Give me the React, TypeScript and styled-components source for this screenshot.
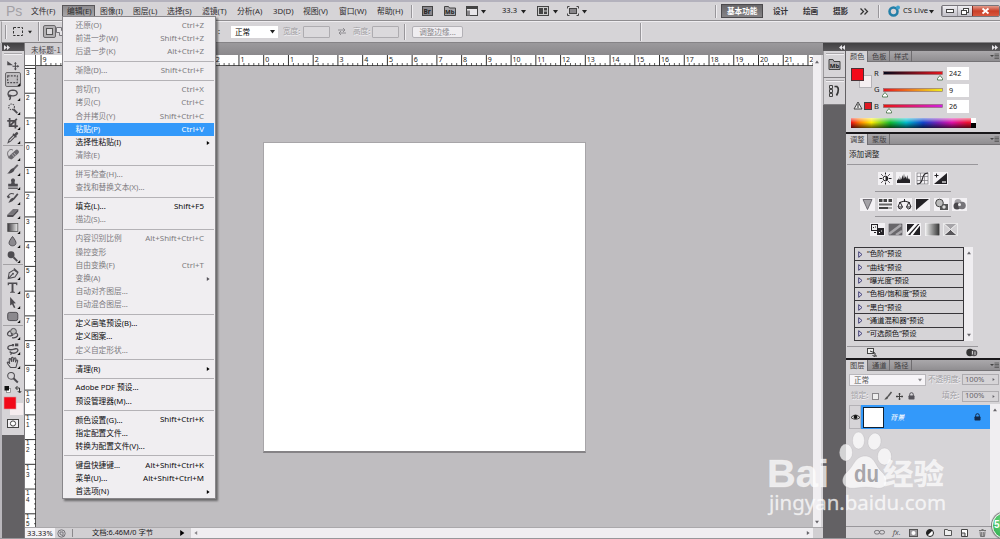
import React from "react";
import styled, { createGlobalStyle, css } from "styled-components";

const sans = `"Noto Sans", "Noto Sans CJK SC", sans-serif`;
const cjk = `"Noto Sans CJK SC", "Noto Sans", sans-serif`;

const Global = createGlobalStyle`
  *{box-sizing:border-box}
  body{margin:0;overflow:hidden;font-family:${sans};font-size:7.6px;color:#222;line-height:1}
  svg{display:block;overflow:visible;flex:none}
`;

const Window = styled.div`
  position: relative;
  width: 1000px;
  height: 539px;
  display: flex;
  flex-direction: column;
  background: #d6d4d7;
  white-space: nowrap;
  overflow: hidden;
`;

/* ---------- menu bar ---------- */
const MenuBar = styled.header`
  height: 21px;
  flex: none;
  border-top: 2px solid #b4b2bd;
  border-bottom: 1px solid #8f8d90;
  display: flex;
  align-items: center;
  padding-left: 5px;
  background: #d6d4d7;
`;
const Logo = styled.div`
  width: 21px;
  padding-left: 1px;
  font: 14px/16px "Liberation Sans", sans-serif;
  color: #a3a1a6;
`;
const MenuItem = styled.div<{ $w: number; $on?: boolean }>`
  width: ${(p) => p.$w}px;
  height: 13px;
  line-height: 12px;
  padding-left: 5px;
  font-size: 7.8px;
  color: #2d2b2e;
  ${(p) =>
    p.$on &&
    css`
      background: linear-gradient(#8e8c8f, #a8a6a9);
      border: 1px solid #59575a;
      padding-left: 4px;
      line-height: 11px;
    `}
`;
const VRule = styled.i<{ $h?: number; $l?: number; $r?: number }>`
  width: 2px;
  height: ${(p) => p.$h ?? 13}px;
  margin-left: ${(p) => p.$l ?? 0}px;
  margin-right: ${(p) => p.$r ?? 0}px;
  border-left: 1px solid #98969a;
  border-right: 1px solid #efedf0;
  flex: none;
`;
const BarIcon = styled.div<{ $w: number }>`
  width: ${(p) => p.$w}px;
  flex: none;
  display: flex;
  align-items: center;
`;
const Workspace = styled.div<{ $w: number; $on?: boolean }>`
  width: ${(p) => p.$w}px;
  height: 14px;
  padding-left: 5px;
  font: 700 7.6px/13px ${cjk};
  color: #333135;
  ${(p) =>
    p.$on &&
    css`
      background: linear-gradient(#69676a, #858386);
      border: 1px solid #4c4a4d;
      color: #fff;
      line-height: 11px;
    `}
`;
const WindowButtons = styled.div`
  display: flex;
  height: 12px;
  width: 59px;
  border: 1px solid #77757b;
  border-radius: 2px;
  overflow: hidden;
  background: linear-gradient(#f0eff3, #c0bec6);
`;
const WinButton = styled.div<{ $close?: boolean }>`
  width: ${(p) => (p.$close ? 28 : 15.5)}px;
  display: flex;
  align-items: center;
  justify-content: center;
  border-left: ${(p) => (p.$close ? "1px solid #862a20" : "1px solid #99979d")};
  ${(p) => p.$close && "background:linear-gradient(#e29a8b,#cb3f28 50%,#d8583e);"}
`;

/* ---------- options bar ---------- */
const OptionsBar = styled.div`
  height: 22px;
  flex: none;
  border-top: 1px solid #efedf0;
  border-bottom: 1px solid #858386;
  border-left: 1px solid #a09ea1;
  margin-left: 1px;
  padding-left: 3px;
  display: flex;
  align-items: center;
  padding-bottom: 1px;
`;
const ModeButton = styled.div`
  width: 13px;
  height: 13px;
  border: 1px solid #69676a;
  border-radius: 2px;
  background: #b2b0b3;
  display: flex;
  align-items: center;
  justify-content: center;
`;
const BlendSelect = styled.div`
  width: 47px;
  height: 12px;
  margin-left: 11px;
  background: #fff;
  padding: 0 3px 0 4px;
  display: flex;
  align-items: center;
  justify-content: space-between;
  font: 7.6px/12px ${cjk};
  color: #000;
`;
const FieldLabel = styled.span<{ $w: number; $l: number }>`
  width: ${(p) => p.$w}px;
  margin-left: ${(p) => p.$l}px;
  color: #a09ea3;
  text-shadow: 0.5px 0.5px 0 #f5f3f6;
`;
const DisabledInput = styled.div`
  width: 27px;
  height: 12px;
  border: 1px solid #aeacb0;
  border-radius: 1px;
  background: #dbd9dc;
`;
const RefineButton = styled.div`
  width: 51px;
  height: 12px;
  margin-left: 6px;
  border: 1px solid #b3b1b6;
  border-radius: 2px;
  background: #efedf0;
  color: #89878c;
  text-align: center;
  font: 7.6px/10px ${cjk};
`;

/* ---------- body ---------- */
const Body = styled.main`
  flex: 1;
  min-height: 0;
  display: flex;
  border-bottom: 1px solid #98969a;
`;
const Tools = styled.aside`
  width: 25px;
  flex: none;
  background: #636164;
  border-left: 2px solid #b9b7bc;
  border-right: 1px solid #7b797c;
`;
const DarkHeader = styled.div`
  height: 8px;
  flex: none;
  background: linear-gradient(#414042, #5a585b);
  display: flex;
  align-items: center;
  justify-content: space-between;
  padding: 0 2px;
`;
const ToolPanel = styled.div`
  background: #d6d4d7;
  height: 384px;
  display: flex;
  flex-direction: column;
  align-items: center;
`;
const Grip = styled.i`
  width: 18px;
  height: 2px;
  margin: 2px 0 2.7px;
  border-top: 1px solid #a9a7aa;
  border-bottom: 1px solid #f1eff2;
  flex: none;
`;
const Tool = styled.div<{ $on?: boolean }>`
  width: 16px;
  height: 14.5px;
  flex: none;
  display: flex;
  align-items: center;
  justify-content: center;
  border-radius: 2px;
  ${(p) => p.$on && "border:1px solid #69676a;background:#c0bec1;"}
`;
const ToolRule = styled.i`
  width: 20px;
  height: 1px;
  margin: 0.8px 0;
  background: #a4a2a5;
  flex: none;
`;
const DocColumn = styled.section`
  width: 798px;
  flex: none;
  display: flex;
  flex-direction: column;
`;
const TabStrip = styled.div`
  height: 12px;
  flex: none;
  background: linear-gradient(#9b999c, #8b898c);
  display: flex;
`;
const DocTab = styled.div`
  width: 190px;
  padding-left: 6px;
  background: #d1cfd2;
  font: 7.6px/13px ${cjk};
  color: #454347;
`;
const Viewport = styled.div`
  flex: 1;
  min-height: 0;
  display: grid;
  grid-template-columns: 11px 777px 8px;
  grid-template-rows: 11px 1fr;
`;
const Corner = styled.div`
  background: #fff;
  border-right: 1px solid #555;
  border-bottom: 1px solid #555;
`;
const RulerBox = styled.div`
  overflow: hidden;
  background: #fff;
`;
const Canvas = styled.div`
  background: #bfbdc0;
  padding: 76px 0 0 227px;
`;
const Paper = styled.div`
  width: 323px;
  height: 311px;
  background: #fff;
  border: 1px solid #a7a5a8;
  border-bottom: 2px solid #858386;
`;
const VScroll = styled.div`
  grid-column: 3;
  grid-row: 1 / 3;
  background: #f0eef1;
  display: flex;
  flex-direction: column;
  align-items: center;
  justify-content: space-between;
  padding: 5px 0 3px;
`;
const Status = styled.footer`
  height: 11px;
  flex: none;
  display: flex;
  align-items: center;
  border-top: 1px solid #aaa8ab;
  background: #d1cfd2;
  color: #19171a;
`;
const Zoom = styled.div`
  width: 30px;
  height: 10px;
  background: #f5f3f6;
  padding-left: 2px;
  line-height: 10px;
  font-size: 7.6px;
`;
const DocSize = styled.div`
  width: 107px;
  padding-left: 19px;
  font-size: 7.3px;
  border-left: 1px solid #8b898c;
  margin-left: 4px;
`;
const HScroll = styled.div`
  flex: 1;
  height: 10px;
  margin-left: 6px;
  margin-right: 10px;
  padding: 0 3px;
  background: #f0eef1;
  display: flex;
  align-items: center;
  justify-content: space-between;
`;

/* ---------- right docks ---------- */
const Docks = styled.aside`
  width: 177px;
  display: flex;
  flex-direction: column;
  background: #636164;
`;
const DockRow = styled.div`
  flex: 1;
  min-height: 0;
  display: flex;
`;
const IconDock = styled.div`
  width: 23px;
  flex: none;
`;
const DockCell = styled.div`
  width: 22px;
  height: 27px;
  background: #d6d4d7;
  border-bottom: 1px solid #807e81;
  border-left: 1px solid #9b999c;
  display: flex;
  flex-direction: column;
  align-items: center;
`;
const Panels = styled.div`
  width: 154px;
  background: #d6d4d7;
  display: flex;
  flex-direction: column;
`;
const Panel = styled.section<{ $h: number }>`
  height: ${(p) => p.$h}px;
  flex: none;
  border-bottom: 2px solid #19171a;
  display: flex;
  flex-direction: column;
`;
const Tabs = styled.div`
  height: 11px;
  flex: none;
  background: linear-gradient(#aaa8ab, #908e91);
  border-bottom: 1px solid #757376;
  display: flex;
  align-items: center;
  padding-right: 1px;
`;
const Tab = styled.div<{ $on?: boolean }>`
  width: 22px;
  height: 11px;
  padding-left: 4px;
  font: 7.2px/10px ${cjk};
  color: #3f3d41;
  border-right: 1px solid #6f6d70;
  ${(p) => p.$on && "background:#d6d4d7;"}
`;
const Flex = styled.div<{ $j?: string; $g?: number; $h?: number; $p?: string; $m?: string; $w?: number }>`
  display: flex;
  align-items: center;
  flex: none;
  justify-content: ${(p) => p.$j ?? "flex-start"};
  gap: ${(p) => p.$g ?? 0}px;
  height: ${(p) => (p.$h ? p.$h + "px" : "auto")};
  width: ${(p) => (p.$w ? p.$w + "px" : "auto")};
  padding: ${(p) => p.$p ?? 0};
  margin: ${(p) => p.$m ?? 0};
`;
const Value = styled.div`
  width: 22px;
  height: 13px;
  background: #fff;
  padding-left: 2px;
  font-size: 7.2px;
  line-height: 12px;
`;
const Spectrum = styled.div`
  display: flex;
  width: 125px;
  height: 10px;
  margin: 3px 0 0 5px;
`;
const Hue = styled.div`
  flex: 1;
  background:
    linear-gradient(rgba(255, 255, 255, 0.6), transparent 45%, rgba(0, 0, 0, 0.65)),
    linear-gradient(90deg, #e11, #f80 8%, #fe0 17%, #1b3 33%, #0bc 46%, #14c 60%, #72b 72%, #d1a 84%, #e13 97%);
`;
const BlackWhite = styled.div`
  width: 5px;
  background: linear-gradient(#fff 50%, #000 50%);
`;
const HRule = styled.i<{ $l: number; $w: number }>`
  width: ${(p) => p.$w}px;
  height: 1px;
  margin-left: ${(p) => p.$l}px;
  background: #99979b;
  flex: none;
`;
const Preset = styled.div`
  height: 13.3px;
  border-bottom: 1px solid #38363a;
  display: flex;
  align-items: center;
  gap: 4px;
  padding-left: 3px;
  font-size: 7.4px;
  color: #111;
`;
const PresetList = styled.div`
  width: 110px;
  border: 1px solid #38363a;
  border-bottom: 0;
`;
const MiniScroll = styled.div<{ $w: number }>`
  width: ${(p) => p.$w}px;
  background: #f0eef1;
  display: flex;
  flex-direction: column;
  align-items: center;
  justify-content: space-between;
  padding: 4px 0;
  align-self: stretch;
`;
const LayerMode = styled.div`
  width: 77px;
  height: 12px;
  border: 1px solid #b9b7bb;
  background: #f7f5f8;
  padding: 0 3px 0 4px;
  display: flex;
  align-items: center;
  justify-content: space-between;
  font: 7.6px/10px ${cjk};
  color: #555;
`;
const Percent = styled.div`
  width: 37px;
  height: 11px;
  border: 1px solid #aeacb0;
  padding: 0 3px 0 2px;
  display: flex;
  align-items: center;
  justify-content: space-between;
  font-size: 7.6px;
  color: #66646a;
`;
const Layer = styled.div`
  width: 129px;
  height: 24px;
  background: #3399fa;
  display: flex;
  align-items: center;
  padding: 0 9px 0 2px;
  color: #fff;
`;
const Thumb = styled.div`
  width: 21px;
  height: 21px;
  background: #fff;
  border: 1px solid #123;
`;
const LayerName = styled.span`
  margin-left: 6px;
  flex: 1;
  font: italic 7.2px/10px ${cjk};
`;
const EyeCell = styled.div`
  width: 12px;
  height: 24px;
  display: flex;
  align-items: center;
  justify-content: center;
  border: 1px solid #b4b2b6;
`;
const LayerBar = styled.div`
  height: 12px;
  border-top: 1px solid #99979b;
  display: grid;
  grid-template-columns: repeat(7, 17.1px);
  padding-left: 25px;
  justify-items: center;
  align-items: center;
  color: #59575c;
`;
const Grow = styled.div`
  flex: 1;
`;

/* ---------- drop-down ---------- */
const Menu = styled.nav`
  position: absolute;
  left: 62px;
  top: 16px;
  width: 154px;
  height: 483px;
  padding: 2.3px 1px 0;
  background: #f0eef1;
  border: 1px solid #88868a;
  box-shadow: 2px 2px 2px rgba(0, 0, 0, 0.45);
`;
const Item = styled.div<{ $off?: boolean; $hot?: boolean }>`
  height: 13.21px;
  padding: 0 10px 0 11.5px;
  display: flex;
  align-items: center;
  justify-content: space-between;
  font-size: 7.7px;
  color: ${(p) => (p.$hot ? "#fff" : p.$off ? "#7d7b80" : "#0c0b0d")};
  ${(p) => p.$hot && "background:#3399fa;"}
`;
const Keys = styled.span<{ $arrow?: boolean }>`
  font-size: 7.95px;
  margin-right: ${(p) => (p.$arrow ? -6 : 0)}px;
`;
const Sep = styled.div`
  height: 5.7px;
  padding-top: 2px;
  &::after {
    content: "";
    display: block;
    height: 1px;
    background: #b4b2b6;
  }
`;

/* ---------- floating marks ---------- */
const Watermark = styled.svg`
  position: absolute;
  left: 760px;
  top: 428px;
`;
const Ball = styled.div`
  position: absolute;
  left: 992px;
  top: 512px;
  width: 27px;
  height: 27px;
  border-radius: 50%;
  border: 1.5px solid #e9f2ea;
  background: radial-gradient(circle at 50% 30%, #6fdc84, #2ba84a);
  box-shadow: 0 0 1px 1px #777;
  color: #fff;
  font: 700 10px/24px "Liberation Sans", sans-serif;
  padding-left: 1px;
`;

type Dir = "d" | "r" | "l" | "u";
const Tri = ({ d = "d", s = 5, c = "#222" }: { d?: Dir; s?: number; c?: string }) => (
  <svg width={s} height={s} viewBox="0 0 10 10">
    <path
      fill={c}
      d={{ d: "M0 2h10L5 9z", u: "M0 8h10L5 1z", r: "M2 0v10l7-5z", l: "M8 0v10L1 5z" }[d]}
    />
  </svg>
);
const Chevs = ({ left = false }) => (
  <svg width="6" height="5" viewBox="0 0 6 5">
    <path fill="#e8e6ea" d={left ? "M3 0v5L0 2.500zM6 0v5L3 2.500z" : "M0 0v5L3 2.500zM3 0v5L6 2.500z"} />
  </svg>
);
const PanelMenu = () => (
  <svg width="9" height="6" viewBox="0 0 9 6">
    <path fill="#444" d="M0 2h4L2 4z" />
    <path stroke="#555" strokeWidth=".8" d="M4.500 1h4.500M4.500 2.500h4.500M4.500 4h4.500M4.500 5.500h4.500" />
  </svg>
);
const Lock = ({ c = "#444" }) => (
  <svg width="7" height="8" viewBox="0 0 7 8">
    <path d="M1.700 4V2.500a1.800 1.800 0 0 1 3.600 0V4" fill="none" stroke={c} />
    <rect x=".5" y="3.500" width="6" height="4" rx=".7" fill={c} />
  </svg>
);

const k = "#4d4b50";
const st = { fill: "none", stroke: k, strokeWidth: 1.1 } as const;
const toolArt: React.ReactNode[] = [
  <g key="a"><path fill={k} d="M1 2l6 4.500H1z" /><path {...st} d="M9.500 4v7M6.500 7.500h6" /><path fill={k} d="M8 5l1.500-2L11 5zM8 10l1.500 2 1.500-2zM11.500 6l2 1.500-2 1.500z" /></g>,
  <rect key="b" x="1.500" y="3" width="10" height="7" {...st} strokeDasharray="2 1.200" />,
  <path key="c" {...st} strokeWidth="1.400" d="M5 9C.500 9 .500 2.500 7 2.200c5 0 6 4.800 1.500 5.800-2 .400-4 0-5-.500C2 7 2 9.500 4 9.500c1 .500 0 2-1 2.500" />,
  <g key="d"><circle cx="5.500" cy="5" r="3" {...st} strokeDasharray="1.500 1" /><path stroke={k} strokeWidth="2" d="M7.500 7.500l4 4" /></g>,
  <path key="e" {...st} strokeWidth="1.800" d="M3.500 1v8.500H12M1 4h8.500v8M4 9l7-7" />,
  <g key="f"><path {...st} d="M2 12l1-3 5-5 1.500 1.500-5 5z" /><path stroke={k} strokeWidth="2.800" strokeLinecap="round" d="M9 4.500L11 2.500" /><path stroke={k} strokeWidth="1.500" d="M7 3l3.500 3.500" /></g>,
  <g key="g"><path stroke="#69676c" strokeWidth="4.400" strokeLinecap="round" d="M5 9.500L11 4" /><path stroke="#c8c6ca" strokeWidth=".8" d="M6 6.500l2.500 3M7.800 5l2.500 3" /><path {...st} strokeWidth=".8" d="M1.500 7C.500 3 5 0 7 2.500M3 11l-1.500-4" /></g>,
  <g key="h"><path stroke="#605e63" strokeWidth="2" d="M12 2L6.500 7.500" /><path fill={k} d="M7.500 5.500c2.500 2-.500 6-7 5.500 3-.500 2.500-5 7-5.500z" /></g>,
  <g key="i" fill={k}><path d="M5 7c1-2-.500-3 0-4 .500-2 3.500-2 4 0 .500 1-1 2 0 4h3v3H2V7z" /><path d="M2 11h10v1.300H2z" /></g>,
  <g key="j"><path stroke={k} strokeWidth="1.800" d="M12 2L7 8" /><path fill={k} d="M7 6c2 2-1 5-5 5 2-1 1-4 5-5z" /><path {...st} d="M8 2C4 .500 2 3 2 5.500M1 4l1 2 2-1" /></g>,
  <g key="k"><path fill="#77757a" d="M1 9l6-6h5.500L7 9z" /><path fill={k} d="M1 9h6l5.500-6v2.500L7 11.500H1z" /></g>,
  <g key="l"><defs><linearGradient id="tg"><stop stopColor="#3a383c" /><stop offset="1" stopColor="#eee" /></linearGradient></defs><rect x="1.500" y="2.500" width="10.500" height="8.500" fill="url(#tg)" stroke="#555" strokeWidth=".8" /></g>,
  <path key="m" d="M6.500 1.500C9 5 10.500 7 10 9c-.700 3-6.300 3-7 0-.500-2 1-4 3.500-7.500z" fill="#8b898e" stroke={k} />,
  <g key="n"><circle cx="5" cy="5" r="3.600" fill={k} /><path stroke={k} strokeWidth="2" d="M7.500 7.500l4 4" /></g>,
  <g key="o"><path {...st} d="M2 12l1-6 5-3 4 3-3 4.500zM2 12l4.500-4.500M8 1.500L12.500 5.500" /><circle cx="7" cy="7" r="1" fill={k} /></g>,
  <path key="p" fill={k} d="M1.500 1.500h10v3h-1l-.500-1.500H7.500v8l1.500.500v.700H4v-.700l1.500-.500V3H3l-.500 1.500h-1z" />,
  <path key="q" fill={k} d="M4 1l6 6.500-2.500.200L9.500 12 8 12.500 6 8.500 4 10z" />,
  <rect key="r" x="1.500" y="2.500" width="10.500" height="8.500" rx="2" fill="#8b898e" stroke={k} />,
  <g key="s"><circle cx="7.500" cy="4.500" r="3" fill="#bbb" stroke={k} /><path {...st} strokeWidth="1.300" d="M4 4C-1 7 2 11 6 8.500M10 6c4 2 1 6-4 5M5 6.500l1.500 2-2.500 1" /></g>,
  <g key="t"><path {...st} strokeWidth="1.400" d="M6 3.500C2 3 .500 6 2.500 7.500s5 0 7-.500 3.500 1.500 2 3-4 2-6 1M3.500 10l2 1.500-1 1.800" /><path fill={k} d="M6 2h2v2.500H6zM9 1.500h3.500v3H9z" /></g>,
  <path key="u" {...st} d="M4.500 12C3 10 1 8 1 7s1.500-1 2.500 1L3 3.500c0-1 1.500-1 1.700 0L5.500 6V2c0-1 1.700-1 1.700 0v4L8.500 2.500c.400-1 1.800-.500 1.500.500l-.500 3.500 1-2c.700-1 1.700 0 1.300 1L10 12z" />,
  <g key="v"><circle cx="5" cy="5" r="3.500" {...st} /><path stroke={k} strokeWidth="2" d="M7.500 7.500l4.500 4.500" /></g>,
];
const noCorner = [0, 21];
const ToolIcon = ({ i }: { i: number }) => (
  <Tool $on={i === 1}>
    <svg width="14" height="12.500" viewBox="0 0 14 13">
      {toolArt[i]}
      {!noCorner.includes(i) && <path d="M14.500 10.500v3h-3z" fill="#111" />}
    </svg>
  </Tool>
);
const range = (a: number, b: number) => Array.from({ length: b - a }, (_, i) => a + i);

const UNIT = 24.74;
const HRuler = () => (
  <svg width="777" height="11" fontSize="7" fill="#222">
    <path d="M0 10.500H777" stroke="#555" />
    {range(-9, 23).map((n) => {
      const x = 227.7 + n * UNIT;
      return (
        <g key={n} stroke="#333">
          <path d={`M${x} 0v11`} />
          <path strokeWidth=".8" d={[1, 2, 3, 4].map((j) => `M${x + (j * UNIT) / 5} 8v3`).join("")} />
          <text x={x + 1.5} y="6.500" stroke="none">{Math.abs(n)}</text>
        </g>
      );
    })}
  </svg>
);
const VRuler = () => (
  <svg width="11" height="462" fontSize="6.300" fontFamily="Liberation Sans" fill="#222">
    <path d="M10.500 0V462" stroke="#555" />
    {range(-3, 16).map((n) => {
      const y = 76.7 + n * UNIT;
      return (
        <g key={n} stroke="#333">
          <path d={`M0 ${y}h11`} />
          <path strokeWidth=".8" d={[1, 2, 3, 4].map((j) => `M9 ${y + (j * UNIT) / 5}h2`).join("")} />
          {String(Math.abs(n)).split("").map((c, i, all) => (
            <text key={i} x="1" y={y + (all.length > 1 ? 5.5 : 7) + i * 7.1} stroke="none">{c}</text>
          ))}
        </g>
      );
    })}
  </svg>
);

const menus: [string, number][] = [
  ["文件(F)", 36], ["编辑(E)", 33], ["图像(I)", 33], ["图层(L)", 34], ["选择(S)", 35], ["滤镜(T)", 35],
  ["分析(A)", 36], ["3D(D)", 30], ["视图(V)", 36], ["窗口(W)", 38], ["帮助(H)", 39],
];

type Entry = [string, string?, string?] | null;
const entries: Entry[] = [
  ["还原(O)", "Ctrl+Z", "off"], ["前进一步(W)", "Shift+Ctrl+Z", "off"], ["后退一步(K)", "Alt+Ctrl+Z", "off"], null,
  ["渐隐(D)...", "Shift+Ctrl+F", "off"], null,
  ["剪切(T)", "Ctrl+X", "off"], ["拷贝(C)", "Ctrl+C", "off"], ["合并拷贝(Y)", "Shift+Ctrl+C", "off"],
  ["粘贴(P)", "Ctrl+V", "hot"], ["选择性粘贴(I)", ">"], ["清除(E)", "", "off"], null,
  ["拼写检查(H)...", "", "off"], ["查找和替换文本(X)...", "", "off"], null,
  ["填充(L)...", "Shift+F5"], ["描边(S)...", "", "off"], null,
  ["内容识别比例", "Alt+Shift+Ctrl+C", "off"], ["操控变形", "", "off"], ["自由变换(F)", "Ctrl+T", "off"],
  ["变换(A)", ">", "off"], ["自动对齐图层...", "", "off"], ["自动混合图层...", "", "off"], null,
  ["定义画笔预设(B)..."], ["定义图案..."], ["定义自定形状...", "", "off"], null,
  ["清理(R)", ">"], null,
  ["Adobe PDF 预设..."], ["预设管理器(M)..."], null,
  ["颜色设置(G)...", "Shift+Ctrl+K"], ["指定配置文件..."], ["转换为配置文件(V)..."], null,
  ["键盘快捷键...", "Alt+Shift+Ctrl+K"], ["菜单(U)...", "Alt+Shift+Ctrl+M"], ["首选项(N)", ">"],
];

const channels: [string, string, string, number][] = [
  ["R", "#00091a,#e8141c", "242", 57], ["G", "#e8141c,#f0f01a", "9", 2], ["B", "#e81410,#d020e0", "26", 6],
];
const presets = ["“色阶”预设", "“曲线”预设", "“曝光度”预设", "“色相/饱和度”预设", "“黑白”预设", "“通道混和器”预设", "“可选颜色”预设"];

const Adj = ({ children }: { children: React.ReactNode }) => (
  <svg width="15" height="13" viewBox="0 0 15 13"><rect width="15" height="13" fill="#f3f1f4" />{children}</svg>
);
const b = "#242226";
const adjRows: React.ReactNode[][] = [
  [
    <g><circle cx="7.500" cy="6.500" r="2.400" fill="#fff" stroke={b} /><path fill={b} d="M7.500 4a2.500 2.500 0 0 1 0 5z" /><path stroke={b} d="M7.500 0.500v2M7.500 10.500v2M1.500 6.500h2.500M11 6.500h2.500M3.300 2.300l1.400 1.400M10.300 9.300l1.400 1.400M3.300 10.700l1.400-1.400M10.300 3.700l1.400-1.400" /></g>,
    <path fill={b} d="M1 11V7.500l1 1V6l1 2 .800-1V4l1 4 .800-1.500L6.500 3l.7 4 .8-5.500.7 5 .8-2.500.8 3 1-4 .7 4.500 1-1.500.500 2 .500-1v4z" />,
    <g fill="none" stroke="#77757a" strokeWidth=".7"><rect x="2" y="1" width="11" height="11" /><path d="M5.500 1v11M9.500 1v11M2 4.500h11M2 8.500h11" /><path stroke={b} strokeWidth="1.100" d="M2 12c8 0 3-11 11-11" /></g>,
    <g><path fill={b} d="M1 12L14 1v11z" /><path stroke={b} d="M1.500 3.500h4M3.500 1.500v4" /><path stroke="#fff" strokeWidth="1.200" d="M9 10h4" /></g>,
  ],
  [
    <path fill="#a5a3a8" stroke="#55535a" strokeWidth=".8" d="M3 1.500h9L7.500 11.500z" />,
    <g fill="#444"><path d="M1 1h3.500v3H1zM5.500 1H9v3H5.500zM10.500 1H14v3h-3.500z" /><path fill="#666" d="M1 5.500h13v2H1z" /><path d="M1 9h9v2H1z" /><path fill="#aaa" d="M10 9h4v2h-4z" /></g>,
    <path fill="none" stroke={b} d="M7.500 1v3M2.500 4.500q5-3 10 0M3 4L1 9h4.500zM12 4l-2.500 5H14zM1 9.500q2.200 3 4.500 0M9.500 9.500q2.200 3 4.500 0" />,
    <g><path fill={b} d="M1 1h13L1 12z" /></g>,
    <g><rect x="6" y="6" width="8" height="6" fill="#555" /><circle cx="5.500" cy="5" r="3.800" fill="#bbb" stroke="#444" /><circle cx="10" cy="9" r="1.700" fill="#ddd" /></g>,
    <g><circle cx="6" cy="4.500" r="3.500" fill="#a5a3a7" /><circle cx="5" cy="8" r="3.500" fill="#4a484c" /><circle cx="10" cy="7.500" r="3.800" fill="#77757a" /><circle cx="7.500" cy="6.500" r="1.500" fill="#eee" /></g>,
  ],
  [
    <g><rect x="1.500" y="1.500" width="6" height="6" fill="#eee" stroke={b} /><rect x="7" y="5" width="7" height="7" fill={b} /><path stroke={b} d="M3 5l1-1M5 4h1M4 9.500h2" /><path stroke="#fff" d="M9 10l1-1M11 8h1" /></g>,
    <g><rect x=".5" y=".5" width="14" height="12" fill="#68666a" /><path stroke="#aaa8ac" strokeWidth="2.500" d="M1 11L13 2M8 12l6-4" /></g>,
    <g><path fill={b} d="M1 1h8L1 10zM14 1v11H7l7-10zM2 12L12 1h2L5 12z" /><path stroke="#fff" strokeWidth="1.500" d="M1 10.500L9.500 1M5 12l9-10.500" /></g>,
    <g><defs><linearGradient id="ag"><stop stopColor="#eee" /><stop offset="1" stopColor="#333" /></linearGradient></defs><rect x=".5" y=".5" width="14" height="12" fill="url(#ag)" /></g>,
    <g stroke="#eee" strokeWidth=".8"><path fill="#a5a3a7" d="M.500.500h14L7.500 6.500z" /><path fill="#59575b" d="M.500 12.500h14L7.500 6.500z" /><path fill="#d2d0d3" d="M.500.500v12l7-6zM14.500.500v12l-7-6z" /></g>,
  ],
];
const AdjRow = ({ i, pad, h }: { i: number; pad: number; h: number }) => (
  <Flex $h={h} $g={3.4} $p={`0 0 0 ${pad}px`}>
    {adjRows[i].map((n, j) => <Adj key={j}>{n}</Adj>)}
  </Flex>
);

export default function App() {
  return (
    <Window>
      <Global />
      <MenuBar>
        <Logo>Ps</Logo>
        {menus.map(([t, w], i) => <MenuItem key={t} $w={w} $on={i === 1}>{t}</MenuItem>)}
        <VRule $r={9} />
        <BarIcon $w={22}>
          <svg width="11" height="10"><rect x=".5" y=".5" width="10" height="9" fill="#89878c" stroke="#444" /><text x="1.500" y="7.500" fontSize="6.500" fontWeight="700" fill="#222">Br</text></svg>
        </BarIcon>
        <BarIcon $w={22}>
          <svg width="12" height="10"><path d="M.500 9.500v-9h4l1 1.500h6v7.500z" fill="#a5a3a7" stroke="#444" /><text x="1" y="8" fontSize="6" fontWeight="700" fill="#222">Mb</text></svg>
        </BarIcon>
        <BarIcon $w={36}>
          <svg width="12" height="10"><rect x=".5" y=".5" width="11" height="9" fill="#e8e6e9" stroke="#444" /><path d="M1 2h10" stroke="#444" strokeWidth="2" /><path d="M1 4.500h3v5H1z" fill="#88868a" /></svg>
          <Flex $m="0 0 0 3px"><Tri /></Flex>
        </BarIcon>
        <BarIcon $w={35}>
          <Flex $w={19}>33.3</Flex><Tri />
        </BarIcon>
        <BarIcon $w={30}>
          <svg width="12" height="10"><rect x=".5" y=".5" width="11" height="9" fill="#ccc" stroke="#444" /><path fill="#444" d="M2 2h4v6H2zM7 2h3v2.500H7zM7 5.500h3V8H7z" /></svg>
          <Flex $m="0 0 0 4px"><Tri /></Flex>
        </BarIcon>
        <BarIcon $w={24}>
          <svg width="12" height="10"><rect x="2.500" y="2.500" width="7" height="5" fill="#88868a" stroke="#444" /><path fill="none" stroke="#444" d="M.500 2.500v-2h2M9.500.500h2v2M.500 7.500v2h2M9.500 9.500h2v-2" /></svg>
          <Flex $m="0 0 0 3px"><Tri /></Flex>
        </BarIcon>
        <Grow />
        <VRule $r={4} />
        <Workspace $w={42} $on>基本功能</Workspace>
        <Workspace $w={32}><Flex $p="0 0 0 5px">设计</Flex></Workspace>
        <Workspace $w={30}><Flex $p="0 0 0 3px">绘画</Flex></Workspace>
        <Workspace $w={28}><Flex $p="0 0 0 3px">摄影</Flex></Workspace>
        <Flex $w={7} />
        <BarIcon $w={18}>
          <svg width="8" height="7"><path d="M.500.500l3 3-3 3M4.500.500l3 3-3 3" fill="none" stroke="#333" strokeWidth="1.300" /></svg>
        </BarIcon>
        <VRule $r={8} />
        <BarIcon $w={15}>
          <svg width="13" height="12"><circle cx="5.500" cy="6.500" r="4" fill="none" stroke="#247fa8" strokeWidth="2.500" /><circle cx="10" cy="2.500" r="2" fill="#3aa0cc" /></svg>
        </BarIcon>
        <BarIcon $w={38}>
          <Flex $w={26}>CS Live</Flex><Tri />
        </BarIcon>
        <WindowButtons>
          <WinButton><svg width="8" height="4"><rect x=".5" y=".5" width="7" height="3" fill="#fff" stroke="#444" /></svg></WinButton>
          <WinButton><svg width="8" height="7"><rect x="2.500" y=".5" width="5" height="4" fill="#fff" stroke="#444" /><rect x=".5" y="2.500" width="5" height="4" fill="#fff" stroke="#444" /></svg></WinButton>
          <WinButton $close><svg width="7" height="6"><path d="M.500.500l6 5M6.500.500l-6 5" stroke="#fff" strokeWidth="1.800" /></svg></WinButton>
        </WindowButtons>
      </MenuBar>

      <OptionsBar>
        <VRule $h={14} $r={6} />
        <BarIcon $w={25}>
          <svg width="11" height="10"><rect x=".5" y=".5" width="9" height="8" fill="none" stroke="#333" strokeDasharray="2.500 1.500" /></svg>
          <Flex $m="0 0 0 4px"><Tri s={4} /></Flex>
        </BarIcon>
        <VRule $h={19} $r={3} />
        <ModeButton><svg width="7" height="7"><rect x=".5" y=".5" width="6" height="6" fill="#dad8db" stroke="#555" /></svg></ModeButton>
        <svg width="8" height="9"><path d="M.500.500h5v3h3v5h-5v-3h-3z" fill="#e5e3e6" stroke="#77757a" /></svg>
        <Flex $w={156} $j="flex-end">:</Flex>
        <BlendSelect>正常<Tri s={5} /></BlendSelect>
        <FieldLabel $l={5} $w={20}>宽度:</FieldLabel>
        <DisabledInput />
        <Flex $m="0 7px 0 8px"><svg width="8" height="7"><path d="M0 2h7M5 0l2 2-2 2M8 5H1M3 3L1 5l2 2" fill="none" stroke="#88868a" strokeWidth=".9" /></svg></Flex>
        <FieldLabel $l={0} $w={19}>高度:</FieldLabel>
        <DisabledInput />
        <VRule $h={16} $l={5} />
        <RefineButton>调整边缘...</RefineButton>
        <VRule $h={18} $l={177} />
      </OptionsBar>

      <Body>
        <Tools>
          <DarkHeader><Chevs /></DarkHeader>
          <ToolPanel>
            <Grip />
            {range(0, 6).map((i) => <ToolIcon key={i} i={i} />)}
            <ToolRule />
            {range(6, 14).map((i) => <ToolIcon key={i} i={i} />)}
            <ToolRule />
            {range(14, 18).map((i) => <ToolIcon key={i} i={i} />)}
            <ToolRule />
            {range(18, 22).map((i) => <ToolIcon key={i} i={i} />)}
            <svg width="20" height="48" viewBox="0 0 20 48">
              <rect x="3.500" y="4.500" width="4" height="4" fill="#fff" stroke="#777" strokeWidth=".7" />
              <rect x="1.500" y="2" width="4.500" height="4.500" fill="#111" />
              <path d="M13 4h3.500v4M14.500 2l-2 2 2 2M14.700 7l2 2 1.500-2" fill="none" stroke="#333" />
              <rect x="7" y="19" width="13" height="12" fill="#f6eef0" />
              <rect x="1" y="13" width="12" height="12" fill="#f20919" stroke="#d89aa0" strokeWidth=".6" />
              <rect x="4.500" y="35.500" width="11" height="8" fill="#f3f1f4" stroke="#444" />
              <circle cx="10" cy="39.500" r="2.600" fill="#fff" stroke="#444" />
            </svg>
          </ToolPanel>
        </Tools>

        <DocColumn>
          <TabStrip><DocTab>未标题-1</DocTab></TabStrip>
          <Viewport>
            <Corner />
            <RulerBox><HRuler /></RulerBox>
            <VScroll><Tri d="u" s={4} c="#66646a" /><Tri d="d" s={4} c="#66646a" /></VScroll>
            <RulerBox><VRuler /></RulerBox>
            <Canvas><Paper /></Canvas>
          </Viewport>
          <Status>
            <Zoom>33.33%</Zoom>
            <Flex $w={13} $j="center">
              <svg width="9" height="9"><circle cx="4.500" cy="4.500" r="3.700" fill="none" stroke="#77757a" /><path d="M3 3h3v4M3 3v2l3 2" stroke="#77757a" fill="none" /></svg>
            </Flex>
            <DocSize>文档:6.46M/0 字节</DocSize>
            <Tri d="r" s={6} c="#000" />
            <HScroll><Tri d="l" s={4} c="#88868a" /><Tri d="r" s={4} c="#66646a" /></HScroll>
          </Status>
        </DocColumn>

        <Docks>
          <DarkHeader><Flex $p="0 0 0 14px"><Chevs left /></Flex><Chevs /></DarkHeader>
          <DockRow>
            <IconDock>
              <DockCell>
                <Grip />
                <svg width="13" height="13"><path d="M1 11.500v-10h4l1 2h6v8z" fill="#aeacb1" stroke="#444" /><text x="1.800" y="10" fontSize="6" fontWeight="700" fill="#222">Mb</text></svg>
              </DockCell>
              <DockCell>
                <Grip />
                <svg width="11" height="13"><path fill="none" stroke="#444" d="M.500.500h3v3h-3zM.500 4.500h3v3h-3zM.500 8.500h3v3h-3z" /><path fill="none" stroke="#333" strokeWidth="1.600" d="M7 1.500c3 0 3 5 .500 9M5.500 1.500h3" /></svg>
              </DockCell>
            </IconDock>
            <Panels>
              <Panel $h={83}>
                <Tabs><Tab $on>颜色</Tab><Tab>色板</Tab><Tab>样式</Tab><Grow /><PanelMenu /></Tabs>
                <Flex $p="3px 0 0 5px">
                  <svg width="22" height="50">
                    <rect x="8.500" y="10.500" width="12" height="12" fill="#f5eff1" stroke="#b5b3b7" />
                    <rect x=".5" y="3.500" width="12" height="12" fill="#f20919" stroke="#4a3035" />
                    <path d="M3 44l4-7 4 7z" fill="#eee" stroke="#444" /><path d="M7 39v4" stroke="#333" />
                    <rect x="13.500" y="37.500" width="7" height="7" fill="#df1822" stroke="#444" />
                  </svg>
                  <Flex>
                    <div>
                      {channels.map(([n, c, v, h]) => (
                        <Flex key={n} $h={16.5}>
                          <Flex $w={10} $p="0 0 0 1px">{n}</Flex>
                          <Flex $w={64}>
                            <svg width="60" height="11">
                              <defs><linearGradient id={"c" + n}><stop stopColor={c.split(",")[0]} /><stop offset="1" stopColor={c.split(",")[1]} /></linearGradient></defs>
                              <rect x=".5" y="3.500" width="59" height="3" fill={`url(#c${n})`} stroke="#88686c" strokeWidth=".6" />
                              <path d={`M${h} 7.500l2.500 3v1.500h-5v-1.500z`} fill="#fff" stroke="#3c6a3c" strokeWidth=".8" />
                            </svg>
                          </Flex>
                          <Value>{v}</Value>
                        </Flex>
                      ))}
                    </div>
                  </Flex>
                </Flex>
                <Spectrum><Hue /><BlackWhite /></Spectrum>
              </Panel>

              <Panel $h={226}>
                <Tabs><Tab $on>调整</Tab><Tab>蒙版</Tab><Grow /><PanelMenu /></Tabs>
                <Flex $h={19} $p="0 0 0 3px">添加调整</Flex>
                <HRule $l={1} $w={131} />
                <AdjRow i={0} pad={32} h={26} />
                <HRule $l={29} $w={76} />
                <AdjRow i={1} pad={14} h={24} />
                <HRule $l={29} $w={76} />
                <AdjRow i={2} pad={23.5} h={25} />
                <Flex $m="5px 0 0 8px">
                  <PresetList>
                    {presets.map((p) => (
                      <Preset key={p}><svg width="5" height="7"><path d="M.700.700v5.600l3.300-2.800z" fill="#dcdaf0" stroke="#34326a" strokeWidth=".9" /></svg>{p}</Preset>
                    ))}
                  </PresetList>
                  <MiniScroll $w={9}><Tri d="u" s={4} c="#66646a" /><Tri d="d" s={4} c="#66646a" /></MiniScroll>
                </Flex>
                <Flex $h={5} />
                <HRule $l={1} $w={131} />
                <Flex $j="space-between" $h={11} $p="0 22px 0 21px">
                  <svg width="11" height="9"><rect x=".5" y=".5" width="6" height="5" fill="#eee" stroke="#444" /><path d="M3 3l5 2v3h2M5.500 7.500l2.500 1" fill="none" stroke="#333" /></svg>
                  <svg width="12" height="9"><circle cx="4" cy="4.500" r="3.700" fill="#333" /><circle cx="8" cy="5" r="3.300" fill="#504e52" /><path d="M6.500 3v3.500M9 3.500V7" stroke="#ccc" /></svg>
                </Flex>
              </Panel>

              <Tabs><Tab $on>图层</Tab><Tab>通道</Tab><Tab>路径</Tab><Grow /><PanelMenu /></Tabs>
              <Flex $h={17} $p="0 0 0 3px">
                <LayerMode>正常<Tri s={4} c="#88868a" /></LayerMode>
                <FieldLabel $l={2} $w={34}>不透明度:</FieldLabel>
                <Percent>100%<Tri d="r" s={3} c="#66646a" /></Percent>
              </Flex>
              <Flex $h={16} $p="0 0 0 5px">
                <FieldLabel $l={0} $w={21}>锁定:</FieldLabel>
                <Flex $g={4.5} $w={70}>
                  <svg width="7" height="7"><rect x=".5" y=".5" width="6" height="6" fill="#eee" stroke="#88868a" /></svg>
                  <svg width="8" height="8"><path d="M7.500 0L4 4.500" stroke="#555" strokeWidth="1.500" /><path d="M4 4c1 2-1 4-4 3.500 1.500-.500 1.500-3 4-3.500z" fill="#555" /></svg>
                  <svg width="7" height="7"><path d="M3.500 0v7M0 3.500h7M2.500 1h2M2.500 6h2M1 2.500v2M6 2.500v2" stroke="#444" /></svg>
                  <Lock c="#55535a" />
                </Flex>
                <FieldLabel $l={0} $w={20}>填充:</FieldLabel>
                <Percent>100%<Tri d="r" s={3} c="#66646a" /></Percent>
              </Flex>
              <DockRow>
                <Flex $p="0 0 0 3px" $h={26} $w={144}>
                  <EyeCell><svg width="9" height="6"><path d="M0 3.500Q4.500-1.500 9 3.500 4.500 7 0 3.500z" fill="#fff" stroke="#333" /><circle cx="4.500" cy="3" r="2" fill="#111" /></svg></EyeCell>
                  <Layer><Thumb /><LayerName>背景</LayerName><Lock c="#122a4a" /></Layer>
                </Flex>
                <MiniScroll $w={10}><Tri d="u" s={4} c="#66646a" /></MiniScroll>
              </DockRow>
              <LayerBar>
                <svg width="11" height="5"><rect x=".5" y=".5" width="5" height="3.500" rx="1.700" fill="none" stroke="#77757a" /><rect x="5.500" y=".5" width="5" height="3.500" rx="1.700" fill="none" stroke="#77757a" /></svg>
                <i>fx.</i>
                <svg width="9" height="8"><rect x=".5" y=".5" width="8" height="7" fill="#99979b" stroke="#555" /><circle cx="4.500" cy="4" r="2" fill="#fff" /></svg>
                <svg width="9" height="8"><circle cx="4" cy="4" r="3.500" fill="#fff" stroke="#222" /><path d="M6.500 1.500L1.500 6.500A3.500 3.500 0 0 1 6.500 1.500z" fill="#222" /></svg>
                <svg width="8" height="7"><path d="M.500 6.500v-6h3l.5 1h3.500v5z" fill="#eee" stroke="#555" /></svg>
                <svg width="8" height="8"><path d="M.500.500h6v7H4V4H.500z" fill="#fff" stroke="#444" /><path d="M.500 4v3.500H4" fill="none" stroke="#444" /></svg>
                <svg width="7" height="8"><path d="M0 1.500h7M2.500.500h2M1 2.500l.5 5h4l.500-5M2.700 3v4M4.300 3v4" fill="none" stroke="#666" strokeWidth=".9" /></svg>
              </LayerBar>
            </Panels>
          </DockRow>
        </Docks>
      </Body>

      <Menu>
        {entries.map((e, i) =>
          e ? (
            <Item key={i} $off={e[2] === "off"} $hot={e[2] === "hot"}>
              <span>{e[0]}</span>
              <Keys $arrow={e[1] === ">"}>{e[1] === ">" ? <Tri d="r" s={4} c={e[2] ? "#55535a" : "#000"} /> : e[1]}</Keys>
            </Item>
          ) : (
            <Sep key={i} />
          ),
        )}
      </Menu>

      <Watermark width="195" height="95" fill="#fff" fillOpacity=".72" stroke="#fff" strokeOpacity=".4" strokeWidth=".5">
        <text x="7" y="59" fontFamily="Liberation Sans" fontWeight="700" fontSize="39" textLength="62" lengthAdjust="spacingAndGlyphs">Bai</text>
        <g stroke="#99979b" strokeOpacity=".4">
          <ellipse cx="86" cy="24.500" rx="6.500" ry="8.500" />
          <ellipse cx="98.500" cy="12.500" rx="6" ry="8.500" />
          <ellipse cx="114.500" cy="13.500" rx="6.500" ry="8.500" transform="rotate(10 114.500 13.500)" />
          <ellipse cx="124.500" cy="28.500" rx="7" ry="8.500" />
          <path d="M105 28c10 0 10 10 17 16 9 9 4 18-6 16-7-1-13-1-20 0-12 2-18-7-9-16 7-6 8-16 18-16z" />
        </g>
        <text x="94" y="54" fontFamily="Liberation Sans" fontWeight="700" fontSize="23" fill="#9d9ba0" fillOpacity=".9" stroke="none" textLength="25" lengthAdjust="spacingAndGlyphs">du</text>
        <text x="123" y="56.500" fontFamily="Noto Sans CJK SC" fontWeight="700" fontSize="29" textLength="61" lengthAdjust="spacingAndGlyphs">经验</text>
        <text x="9" y="82" fontFamily="Noto Sans" fontSize="19" textLength="177" lengthAdjust="spacingAndGlyphs">jingyan.baidu.com</text>
      </Watermark>
      <Ball>5</Ball>
    </Window>
  );
}
